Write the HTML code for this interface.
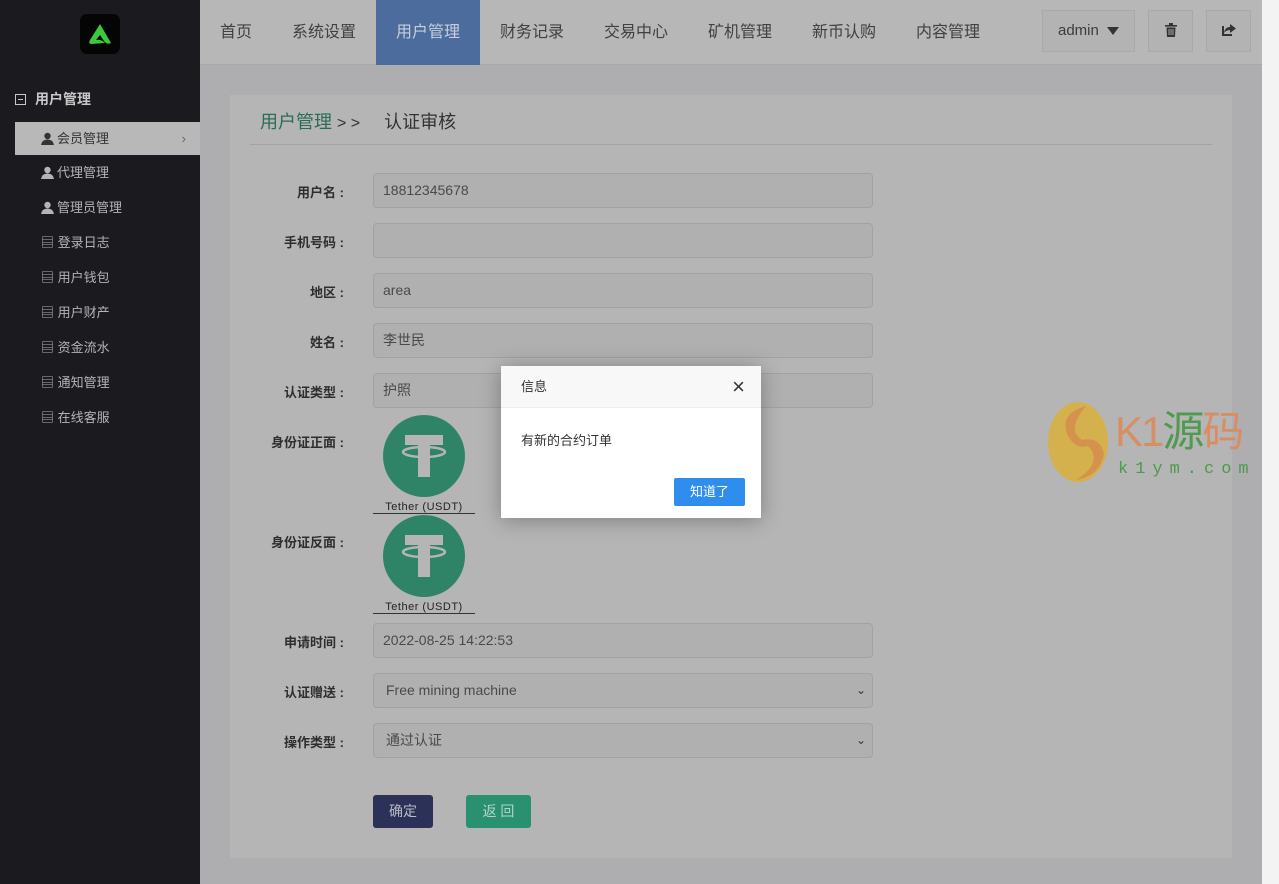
<!DOCTYPE html>
<html><head><meta charset="utf-8"><style>
*{margin:0;padding:0;box-sizing:border-box}
body{width:1279px;height:884px;overflow:hidden;background:#aeaeb1;font-family:"Liberation Sans","Noto Sans CJK SC",sans-serif;position:relative;color:#333}
.side{position:absolute;left:0;top:0;width:200px;height:884px;background:#1b1a1f}
.logo{position:absolute;left:80px;top:14px;width:40px;height:40px;background:#050505;border-radius:7px}
.grp{position:absolute;left:15px;top:89px;color:#c8c8c8;font-size:14px;font-weight:bold}
.grp b{display:inline-block;width:11px;height:11px;border:1px solid #c8c8c8;margin-right:9px;position:relative;top:1px}
.grp b:after{content:"";position:absolute;left:2px;top:4px;width:5px;height:1px;background:#c8c8c8}
.item{position:absolute;left:15px;width:185px;height:33px;line-height:33px;padding-left:26px;font-size:13px;color:#b4b4b4}
.item svg{vertical-align:-2px;margin-right:3px}
.item.act{background:#b8b8b8;color:#333}
.top{position:absolute;left:200px;top:0;width:1062px;height:65px;background:#b7b7b7;border-bottom:1px solid #a8a8a8}
.nav{position:absolute;top:0;height:65px;line-height:66px;font-size:16px;color:#404040}
.nav.act{background:#4b6c9c;color:#c8cfdc;width:104px;text-align:center}
.tb{position:absolute;top:10px;height:42px;border:1px solid #a9a9a9;background:#b3b3b3;text-align:center;line-height:40px;color:#3c3c3c;font-size:15px}
.tb svg{margin-top:12px}
.scr{position:absolute;left:1262px;top:0;width:17px;height:884px;background:#f3f3f3}
.card{position:absolute;left:230px;top:95px;width:1002px;height:763px;background:#b5b5b5}
.bc{position:absolute;left:30px;top:13px;font-size:18px;color:#2b6c58}
.bc span{color:#333;font-size:16px}
.bc i{font-style:normal;color:#333;margin-left:24px;font-size:18px}
.hr{position:absolute;left:20px;top:49px;width:962px;height:1px;background:#a3a3a3}
.lab{position:absolute;left:0;width:114px;text-align:right;font-size:13px;font-weight:bold;color:#2e2e2e}
.inp{position:absolute;left:143px;width:500px;height:35px;border:1px solid #a2a2a2;border-radius:4px;background:#b0b0b0;padding-left:9px;line-height:33px;font-size:14px;color:#4a4a4a}
.inp .ar{position:absolute;right:6px;top:0;font-size:12px;color:#333}
.usdt{position:absolute;left:143px;width:102px;text-align:center;font-size:11px;color:#222;letter-spacing:.5px}
.usdt .c{width:82px;height:82px;border-radius:50%;background:#2f8468;margin:0 auto 4px;position:relative}
.usdt .ln{border-bottom:1px solid #333;width:102px;height:1px}
.btn{position:absolute;top:700px;height:33px;line-height:33px;border-radius:3px;text-align:center;font-size:14px}
.dlg{position:absolute;left:501px;top:366px;width:260px;height:152px;background:#fff;box-shadow:0 2px 20px rgba(0,0,0,.3)}
.dh{height:42px;border-bottom:1px solid #eee;background:#f8f8f8;line-height:42px;padding-left:20px;font-size:13px;color:#333}
</style></head><body>
<div class="side">
 <div class="logo"><svg width="40" height="40" viewBox="0 0 40 40"><path d="M20 10 L31 29 Q27 31 24 27 L20 21 L16 26 Q21 25 25 29 L11 30 Q8 29 10 26 Z" fill="#3cc93c"/></svg></div>
 <div class="grp"><b></b>用户管理</div>
 <div class="item act" style="top:122px"><svg width="13" height="13" viewBox="0 0 13 13"><circle cx="6.5" cy="4" r="3.2" fill="#333"/><path d="M0 13 Q1 7.5 6.5 7.5 Q12 7.5 13 13Z" fill="#333"/></svg>会员管理<span style="position:absolute;right:14px;color:#666">›</span></div>
 <div class="item" style="top:156px"><svg width="13" height="13" viewBox="0 0 13 13"><circle cx="6.5" cy="4" r="3.2" fill="#b4b4b4"/><path d="M0 13 Q1 7.5 6.5 7.5 Q12 7.5 13 13Z" fill="#b4b4b4"/></svg>代理管理</div>
 <div class="item" style="top:191px"><svg width="13" height="13" viewBox="0 0 13 13"><circle cx="6.5" cy="4" r="3.2" fill="#b4b4b4"/><path d="M0 13 Q1 7.5 6.5 7.5 Q12 7.5 13 13Z" fill="#b4b4b4"/></svg>管理员管理</div>
 <div class="item" style="top:226px">▤ 登录日志</div>
 <div class="item" style="top:261px">▤ 用户钱包</div>
 <div class="item" style="top:296px">▤ 用户财产</div>
 <div class="item" style="top:331px">▤ 资金流水</div>
 <div class="item" style="top:366px">▤ 通知管理</div>
 <div class="item" style="top:401px">▤ 在线客服</div>
</div>
<div class="top">
 <div class="nav" style="left:20px">首页</div>
 <div class="nav" style="left:92px">系统设置</div>
 <div class="nav act" style="left:176px">用户管理</div>
 <div class="nav" style="left:300px">财务记录</div>
 <div class="nav" style="left:404px">交易中心</div>
 <div class="nav" style="left:508px">矿机管理</div>
 <div class="nav" style="left:612px">新币认购</div>
 <div class="nav" style="left:716px">内容管理</div>
 <div class="tb" style="left:842px;width:93px">admin <svg width="12" height="8" viewBox="0 0 12 8" style="margin:0 0 0 4px"><path d="M0 0H12L6 8Z" fill="#333"/></svg></div>
 <div class="tb" style="left:948px;width:45px"><svg width="12" height="14" viewBox="0 0 12 14"><rect x="0" y="2" width="12" height="1.6" fill="#333"/><rect x="4" y="0" width="4" height="2" fill="#333"/><path d="M1.5 4.5H10.5L10 14H2Z" fill="#333"/><path d="M4 6V12M6 6V12M8 6V12" stroke="#b3b3b3" stroke-width="0.9"/></svg></div>
 <div class="tb" style="left:1006px;width:45px"><svg width="14" height="13" viewBox="0 0 14 13"><path d="M8 4 V1 L14 5.5 L8 10 V7 Q4 7 2 10 Q3 4 8 4Z" fill="#333"/><path d="M1 3 V12 H10" stroke="#333" stroke-width="2" fill="none"/></svg></div>
</div>
<div class="scr"></div>
<div class="card">
 <div class="bc">用户管理 <span>&gt; &gt;</span><i>认证审核</i></div>
 <div class="hr"></div>
 <div class="lab" style="top:87px">用户名 :</div><div class="inp" style="top:78px">18812345678</div>
 <div class="lab" style="top:137px">手机号码 :</div><div class="inp" style="top:128px"></div>
 <div class="lab" style="top:187px">地区 :</div><div class="inp" style="top:178px">area</div>
 <div class="lab" style="top:237px">姓名 :</div><div class="inp" style="top:228px">李世民</div>
 <div class="lab" style="top:287px">认证类型 :</div><div class="inp" style="top:278px">护照</div>
 <div class="lab" style="top:337px">身份证正面 :</div>
 <div class="usdt" style="top:320px"><div class="c"><svg width="82" height="82"><rect x="22" y="20" width="38" height="10" fill="#b5b5b5"/><rect x="35" y="20" width="12" height="42" fill="#b5b5b5"/><ellipse cx="41" cy="37" rx="21" ry="5" fill="none" stroke="#b5b5b5" stroke-width="2.5"/></svg></div>Tether (USDT)<div class="ln"></div></div>
 <div class="lab" style="top:437px">身份证反面 :</div>
 <div class="usdt" style="top:420px"><div class="c"><svg width="82" height="82"><rect x="22" y="20" width="38" height="10" fill="#b5b5b5"/><rect x="35" y="20" width="12" height="42" fill="#b5b5b5"/><ellipse cx="41" cy="37" rx="21" ry="5" fill="none" stroke="#b5b5b5" stroke-width="2.5"/></svg></div>Tether (USDT)<div class="ln"></div></div>
 <div class="lab" style="top:537px">申请时间 :</div><div class="inp" style="top:528px">2022-08-25 14:22:53</div>
 <div class="lab" style="top:587px">认证赠送 :</div><div class="inp" style="top:578px;padding-left:12px">Free mining machine<span class="ar">⌄</span></div>
 <div class="lab" style="top:637px">操作类型 :</div><div class="inp" style="top:628px;padding-left:12px">通过认证<span class="ar">⌄</span></div>
 <div class="btn" style="left:143px;width:60px;background:#2c3158;color:#b8bbc8">确定</div>
 <div class="btn" style="left:236px;width:65px;background:#2a9170;color:#b3d6c8">返 回</div>
</div>
<svg style="position:absolute;left:1046px;top:400px" width="64" height="84" viewBox="0 0 64 84"><ellipse cx="32" cy="42" rx="30" ry="40" fill="#d5b14d"/><path d="M40 6 Q12 14 22 36 Q30 50 42 46 Q58 62 30 80 Q54 76 58 54 Q54 36 36 40 Q20 30 40 6Z" fill="#d4894f" opacity=".8"/></svg>
<div style="position:absolute;left:1115px;top:398px;font-size:42px;color:#d88e62;letter-spacing:-2px">K1<span style="color:#4e9a4e">源</span>码</div>
<div style="position:absolute;left:1118px;top:460px;font-size:17px;color:#4e9a4e;letter-spacing:7px;font-family:'Liberation Mono',monospace">k1ym.com</div>
<div class="dlg">
 <div class="dh">信息<span style="position:absolute;right:16px;top:0;font-size:22px;color:#333">×</span></div>
 <div style="padding:22px 20px;font-size:13px;color:#333">有新的合约订单</div>
 <div style="position:absolute;left:173px;top:112px;width:71px;height:28px;background:#2e8ded;color:#fff;font-size:13px;text-align:center;line-height:28px;border-radius:2px">知道了</div>
</div>
</body></html>
